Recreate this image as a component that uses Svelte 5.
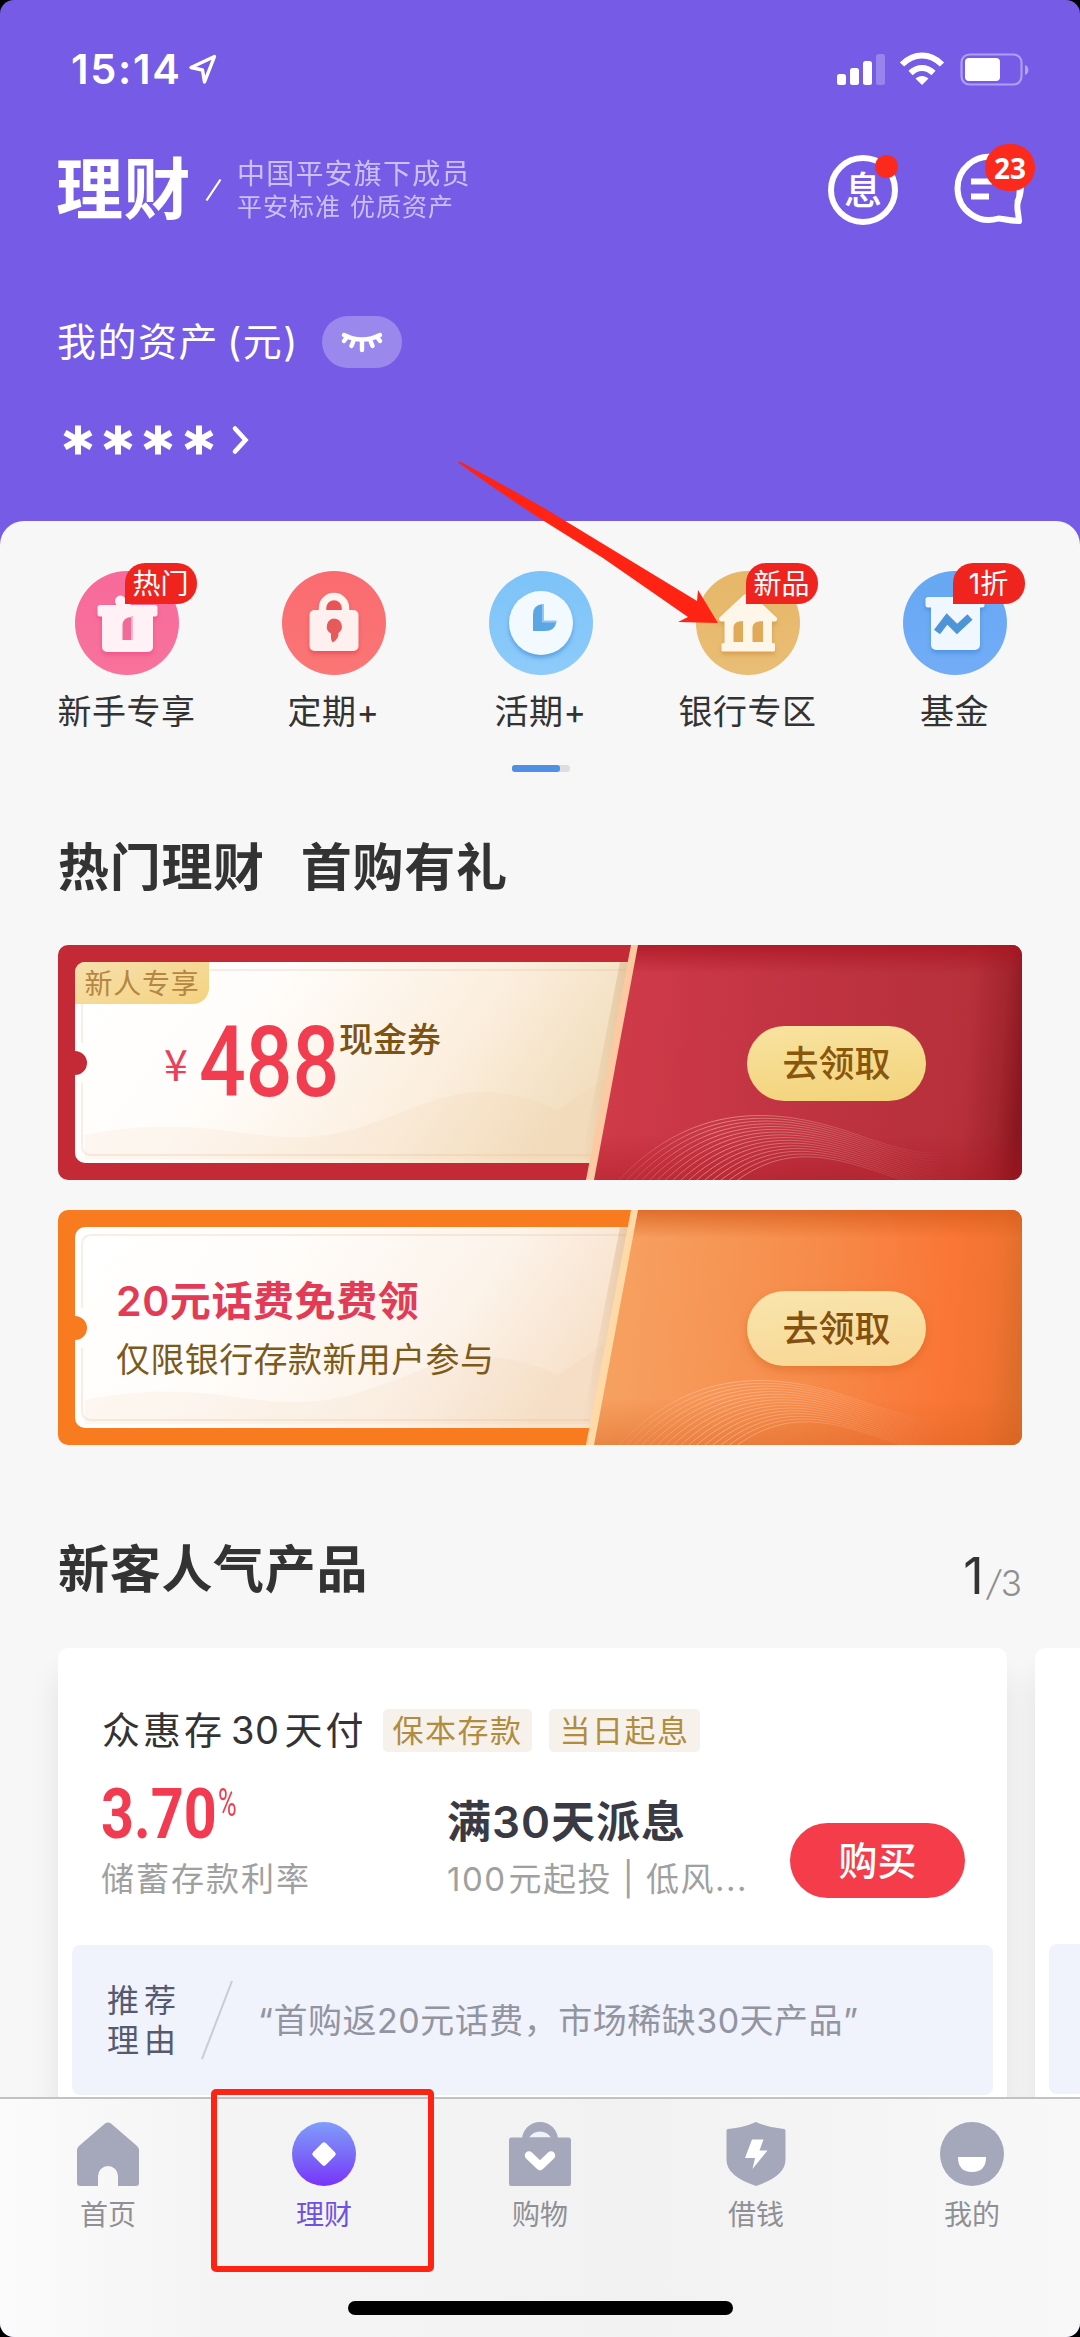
<script>
  const entries = [
    { id: "gift", label: "新手专享", badge: "热门", from: "#f76a9b", to: "#f8729b" },
    { id: "lock", label: "定期+", badge: "", from: "#fa6b70", to: "#fb7676" },
    { id: "clock", label: "活期+", badge: "", from: "#7dc3f8", to: "#8dcbfa" },
    { id: "bank", label: "银行专区", badge: "新品", from: "#e6b768", to: "#e9bd75" },
    { id: "fund", label: "基金", badge: "1折", from: "#66a8f3", to: "#73acf7" },
  ];

  const tabs = [
    { id: "home", label: "首页" },
    { id: "wealth", label: "理财" },
    { id: "shop", label: "购物" },
    { id: "loan", label: "借钱" },
    { id: "mine", label: "我的" },
  ];

  let active = $state("wealth");

  // fine lines of the wave at the bottom of each coupon
  const waves = Array.from({ length: 16 }, (_, i) => {
    const x = i * 6;
    const y = i * 2.9;
    return `M${560 + x} ${236 + y * 0.6} C${640 + x * 0.8} ${150 + y},${730 + x * 0.4} ${165 + y},${800 + x * 0.3} ${190 + y * 0.9} S${880} ${208 + y * 0.9},${900} ${204 + y}`;
  });
</script>

{#snippet coupon(kind)}
  <svg class="art" viewBox="0 0 964 235" aria-hidden="true">
    <defs>
      <clipPath id="{kind}-clip"><rect width="964" height="235" rx="10" /></clipPath>
      <linearGradient id="{kind}-paper" x1="0" y1="0" x2="1" y2="0.25">
        <stop offset="0" stop-color="#ffffff" />
        <stop offset="0.35" stop-color="#fffdfb" />
        <stop offset="0.75" stop-color={kind === "red" ? "#fbeedd" : "#fcf3ea"} />
        <stop offset="1" stop-color={kind === "red" ? "#f3dfc0" : "#f8e2cc"} />
      </linearGradient>
      <linearGradient id="{kind}-right" gradientUnits="userSpaceOnUse" x1="534" y1="90" x2="964" y2="125">
        {#if kind === "red"}
          <stop offset="0" stop-color="#d13b49" />
          <stop offset="0.5" stop-color="#c03342" />
          <stop offset="0.87" stop-color="#b6303a" />
          <stop offset="0.95" stop-color="#a3252d" />
          <stop offset="1" stop-color="#8a1620" />
        {:else}
          <stop offset="0" stop-color="#f6a363" />
          <stop offset="0.5" stop-color="#f68c4b" />
          <stop offset="0.82" stop-color="#fa7636" />
          <stop offset="0.93" stop-color="#f27331" />
          <stop offset="1" stop-color="#dc6c2a" />
        {/if}
      </linearGradient>
      <linearGradient id="{kind}-shade" x1="0" y1="0" x2="0" y2="1">
        <stop offset="0" stop-color={kind === "red" ? "#a8141f" : "#d85d1c"} stop-opacity="0.75" />
        <stop offset="0.12" stop-color={kind === "red" ? "#a8141f" : "#d85d1c"} stop-opacity="0" />
        <stop offset="0.8" stop-color={kind === "red" ? "#a8141f" : "#d85d1c"} stop-opacity="0" />
        <stop offset="1" stop-color={kind === "red" ? "#a8141f" : "#d85d1c"} stop-opacity="0.4" />
      </linearGradient>
      <linearGradient id="{kind}-fold" x1="0" y1="0" x2="1" y2="0">
        <stop offset="0" stop-color="#c08a50" stop-opacity="0" />
        <stop offset="1" stop-color="#c08a50" stop-opacity="0.35" />
      </linearGradient>
      <linearGradient id="{kind}-wave" gradientUnits="userSpaceOnUse" x1="560" y1="0" x2="890" y2="0">
        <stop offset="0" stop-color="#ffd2b8" stop-opacity="0.1" />
        <stop offset="0.3" stop-color="#ffd2b8" stop-opacity="0.5" />
        <stop offset="1" stop-color="#ffd2b8" stop-opacity="0" />
      </linearGradient>
    </defs>
    <g clip-path="url(#{kind}-clip)">
      <rect width="964" height="235" fill={kind === "red" ? "#c42a35" : "#f97b20"} />
      <path d="M27 17H576L536 218H27a10 10 0 0 1-10-10V130a12 12 0 0 0 0-24V27a10 10 0 0 1 10-10Z" fill="url(#{kind}-paper)" />
      <path d="M27 190C150 165 200 205 280 188S400 120 500 165L552 130L534 214H27Z" fill="#f0c89a" opacity="0.12" />
      <path d="M568 25H34Q24 25 24 35V98M24 138V200Q24 210 34 210H532" fill="none" stroke="#d9b78c" stroke-opacity="0.22" stroke-width="2" />
      <path d="M562 17H576L537 218H523Z" fill="url(#{kind}-fold)" />
      <path d="M578 0H964V235H534Z" fill="url(#{kind}-right)" />
      <path d="M578 0H964V235H534Z" fill="url(#{kind}-shade)" />
      <g fill="none" stroke="url(#{kind}-wave)" stroke-width="1">
        {#each waves as d}
          <path {d} />
        {/each}
      </g>
      <path d="M573 0H580L536 235H528Z" fill={kind === "red" ? "#fcc9a2" : "#ffd9a8"} />
    </g>
  </svg>
{/snippet}

<div class="frame">
  <div class="screen">
    <header>
      <div class="status">
        <span class="time">15:14</span>
        <svg class="loc" width="30" height="32" viewBox="0 0 30 32">
          <path d="M26.500 3.500L3 14.500L14.500 17L16.500 29Z" fill="none" stroke="#fff" stroke-width="3.400" stroke-linejoin="round" />
        </svg>
        <svg class="signals" width="194" height="36" viewBox="0 0 194 36">
          <rect x="1" y="23" width="9" height="11" rx="2.500" fill="#fff" />
          <rect x="14" y="17" width="9" height="17" rx="2.500" fill="#fff" />
          <rect x="27" y="10" width="9" height="24" rx="2.500" fill="#fff" />
          <rect x="40" y="3" width="9" height="31" rx="2.500" fill="#fff" opacity="0.25" />
          <g fill="none" stroke="#fff" stroke-width="6">
            <path d="M66 13.500C78 1.500 94 1.500 106 13.500" />
            <path d="M74.500 22C81.500 15.200 90.500 15.200 97.500 22" />
          </g>
          <path d="M79.500 27.500C83.500 24 88.500 24 92.500 27.500L86 34Z" fill="#fff" />
          <rect x="125.500" y="3.500" width="60" height="30" rx="8" fill="none" stroke="#fff" stroke-opacity="0.42" stroke-width="2.200" />
          <rect x="129" y="7" width="35" height="23" rx="4" fill="#fff" />
          <path d="M189 14C193.500 15 193.500 23 189 24Z" fill="#fff" opacity="0.45" />
        </svg>
      </div>

      <div class="brand">
        <h1>理财</h1>
        <svg class="slash" width="17" height="24" viewBox="0 0 17 24"><path d="M1.500 22.500L15.500 1.500" stroke="#fff" stroke-width="2.200" /></svg>
        <div class="slogan">
          <p>中国平安旗下成员</p>
          <p class="small">平安标准 优质资产</p>
        </div>
        <div class="round">息<i class="dot"></i></div>
        <div class="chat">
          <svg width="74" height="74" viewBox="0 0 74 74" fill="none" stroke="#fff">
            <path d="M65 50A31.500 31.500 0 1 0 46.500 65.500C50 65.500 56 67.500 67 68C66.500 60 64 54 66 48.500Q68 43 67.500 36" stroke-width="6" stroke-linejoin="round" />
            <path d="M19 28.500H40M19 43.500H37" stroke-width="6" />
          </svg>
          <b>23</b>
        </div>
      </div>

      <div class="assets">
        <span>我的资产<em>(元)</em></span>
        <button class="eye" type="button" aria-label="隐藏资产">
          <svg width="42" height="24" viewBox="0 0 42 24" fill="none" stroke="#fff" stroke-width="4.400" stroke-linecap="round">
            <path d="M3 5C14 11 28 11 39 5" />
            <path d="M6 7L3 11M13 9.500L10.500 16M21 10V20M29 9.500L31.500 16M36 7L39 11" />
          </svg>
        </button>
      </div>

      <div class="hidden-sum">
        <svg width="190" height="34" viewBox="0 0 190 34" fill="none" stroke="#fff" stroke-width="6">
          {#each [0, 40, 80, 121] as x}
            <path d="M{x + 17} 2.500V31.500M{x + 4} 9.700L{x + 30} 24.300M{x + 4} 24.300L{x + 30} 9.700" />
          {/each}
          <path d="M174 5.500L184.500 17L174 28.500" stroke-width="4.600" stroke-linecap="round" />
        </svg>
      </div>
    </header>

    <main>
      <nav class="entries">
        {#each entries as e}
          <div class="entry">
            <div class="icon">
              <svg width="104" height="104" viewBox="0 0 104 104">
                <defs>
                  <linearGradient id="bg-{e.id}" x1="0" y1="0" x2="0" y2="1">
                    <stop offset="0" stop-color={e.from} />
                    <stop offset="1" stop-color={e.to} />
                  </linearGradient>
                </defs>
                <circle cx="52" cy="52" r="52" fill="url(#bg-{e.id})" />
                {#if e.id === "gift"}
                  <g class="glyph pink">
                    <path d="M43 35a5.500 5.500 0 1 1 7-8L56 34H80a2.500 2.500 0 0 1 2.500 2.500V43a2.500 2.500 0 0 1-2.500 2.500H78V76a5 5 0 0 1-5 5H32a5 5 0 0 1-5-5V45.500H25a2.500 2.500 0 0 1-2.500-2.500V36.500A2.500 2.500 0 0 1 25 34H44Z" fill="#fff1f5" />
                    <path d="M57 46V69H47.500V54Q48 46 57 46Z" fill="#f26a97" />
                    <path d="M57 45V69" stroke="#f9b7cd" stroke-width="2" />
                  </g>
                {:else if e.id === "lock"}
                  <g class="glyph red">
                    <path d="M41 42V37a11.500 11.500 0 0 1 23 0V42" transform="translate(-.500 0)" fill="#e85458" stroke="#fff3ef" stroke-width="7.500" />
                    <rect x="27.500" y="39" width="49" height="41" rx="5" fill="#fdf0ee" />
                    <path d="M52 47.500a8 8 0 0 1 4.500 14.500Q57 68 50.500 71.500V71Q48.500 69 49 62.500A8 8 0 0 1 52 47.500Z" fill="#e65a5c" />
                  </g>
                {:else if e.id === "clock"}
                  <g class="glyph blue">
                    <circle cx="52" cy="52" r="32" fill="#f3faff" />
                    <path d="M54 33V50.500H67.500Q66 60 56 60H44V43Q44 34 54 33Z" fill="#5ca6e6" />
                    <path d="M54 33V50.500H67.500" fill="none" stroke="#91c7f2" stroke-width="2" />
                  </g>
                {:else if e.id === "bank"}
                  <g class="glyph gold">
                    <path d="M47 24.500Q52 20.500 57 24.500L80 46a2.500 2.500 0 0 1-2 4.500H76V72H77.500a1.500 1.500 0 0 1 1.500 1.500V79a1.500 1.500 0 0 1-1.500 1.500H27a1.500 1.500 0 0 1-1.500-1.500V73.500A1.500 1.500 0 0 1 27 72H28.500V50.500H25.500A2.500 2.500 0 0 1 24 46Z" fill="#fef7e9" />
                    <path d="M47 50V71H37.500V56Q38 50 47 50ZM67 50V71H56.500V56Q57 50 67 50Z" fill="#e0aa58" />
                  </g>
                {:else}
                  <g class="glyph blue">
                    <path d="M25 26H79a2.500 2.500 0 0 1 2.500 2.500V34a2.500 2.500 0 0 1-2.500 2.500H77V74a5 5 0 0 1-5 5H33a5 5 0 0 1-5-5V36.500H25a2.500 2.500 0 0 1-2.500-2.500V28.500A2.500 2.500 0 0 1 25 26Z" fill="#f0f7fe" />
                    <path d="M34 61L44 48L54 58L67 46" fill="none" stroke="#4e94d8" stroke-width="7.500" />
                  </g>
                {/if}
              </svg>
              {#if e.badge}
                <span class="badge">{e.badge}</span>
              {/if}
            </div>
            <span class="name">{e.label}</span>
          </div>
        {/each}
      </nav>
      <div class="pager"><i></i></div>

      <h2 class="hot"><span>热门理财</span><span>首购有礼</span></h2>

      <section class="coupon">
        {@render coupon("red")}
        <div class="body">
          <span class="tag">新人专享</span>
          <div class="amount">
            <span class="yen">¥</span>
            <span class="num"><b>488</b></span>
            <span class="unit">现金券</span>
          </div>
        </div>
        <button class="get" type="button">去领取</button>
      </section>

      <section class="coupon second">
        {@render coupon("orange")}
        <div class="body text">
          <strong>20元话费免费领</strong>
          <p>仅限银行存款新用户参与</p>
        </div>
        <button class="get pale" type="button">去领取</button>
      </section>

      <div class="popular">
        <h2>新客人气产品</h2>
        <span class="page"><b>1</b><i>/</i><i>3</i></span>
      </div>

      <div class="cards">
        <article class="card">
          <div class="line">
            <h3>众惠存<span>30</span>天付</h3>
            <span class="mark">保本存款</span>
            <span class="mark wide">当日起息</span>
          </div>
          <div class="info">
            <div class="rate">
              <div class="value"><b>3.70</b><sup>%</sup></div>
              <p>储蓄存款利率</p>
            </div>
            <div class="term">
              <strong>满30天派息</strong>
              <p><span>100</span>元起投 | 低风...</p>
            </div>
            <button class="buy" type="button">购买</button>
          </div>
          <div class="reason">
            <div class="why">推荐<br />理由</div>
            <svg width="32" height="80" viewBox="0 0 32 80"><path d="M1 79L31 1" stroke="#c9cbd8" stroke-width="2" /></svg>
            <p>“首购返20元话费，市场稀缺30天产品”</p>
          </div>
        </article>
        <article class="card next">
          <div class="reason"></div>
        </article>
      </div>
    </main>

    <footer>
      <div class="tabs">
        {#each tabs as t}
          <button class="tab" class:active={active === t.id} type="button" onclick={() => (active = t.id)}>
            <svg width="64" height="64" viewBox="0 0 64 64" fill="#a5a7ba">
              {#if t.id === "home"}
                <path d="M29 1.500Q32-.500 35 1.500L61 24Q63 26 63 28V61Q63 64 60 64H42V54a10 10 0 0 0-20 0V64H4Q1 64 1 61V28Q1 26 3 24Z" />
              {:else if t.id === "wealth"}
                <defs>
                  <linearGradient id="coin" x1="0" y1="0" x2="0" y2="1">
                    <stop offset="0" stop-color="#7f9dfb" />
                    <stop offset="0.5" stop-color="#7a6cf8" />
                    <stop offset="1" stop-color="#7834fa" />
                  </linearGradient>
                </defs>
                <circle cx="32" cy="32" r="32" fill="url(#coin)" />
                <rect x="23" y="23" width="18" height="18" rx="2.500" transform="rotate(45 32 32)" fill="#fff" />
              {:else if t.id === "shop"}
                <path d="M14 18a18 18 0 0 1 36 0Z" />
                <path d="M21 15.500Q25 9.500 32 9.500T43 15.500Z" fill="#f1f1fa" />
                <rect x="1" y="15.500" width="62" height="48.500" rx="2.500" />
                <path d="M21 33.500L32 44L43 33.500" fill="none" stroke="#fff" stroke-width="8.500" stroke-linecap="round" stroke-linejoin="round" />
              {:else if t.id === "loan"}
                <path d="M32 0Q44 5.500 60 7Q61.500 7 61.500 9V38Q61.500 54 32 64Q2.500 54 2.500 38V9Q2.500 7 4 7Q20 5.500 32 0Z" />
                <path d="M28 17.500H39.500L35.500 28.500H43.500L28.500 47L31 36H21Z" fill="#fff" />
              {:else}
                <circle cx="32" cy="32" r="32" />
                <path d="M18 35H46Q46 50 32 50T18 35Z" fill="#fff" />
              {/if}
            </svg>
            <span>{t.label}</span>
          </button>
        {/each}
      </div>
      <div class="home-bar"></div>
    </footer>
  </div>

  <!-- callouts over the screen -->
  <svg class="arrow" width="262" height="166" viewBox="0 0 262 166">
    <path d="M0 1.500L2 .500L36 19L86 47L239 140L240 129L260 162L220 161L230 156L145 97L78 55L32 24Z" fill="#ff2313" />
  </svg>
  <div class="focus-box"></div>
</div>

<style>
  :global(body) {
    background: #000;
  }

  .frame {
    position: relative;
    width: 1080px;
    height: 2337px;
    overflow: hidden;
    background: #000;
    font-family: Inter, "Noto Sans CJK SC", sans-serif;
    color: #333;
  }
  .screen {
    display: flex;
    flex-direction: column;
    height: 2337px;
    border-radius: 14px;
    overflow: hidden;
    background: #755be6;
  }
  h1, h2, h3, p { margin: 0; }
  em, i { font-style: normal; }
  button {
    border: none;
    padding: 0;
    font-family: inherit;
    cursor: pointer;
  }
  svg { display: block; flex: none; }

  header {
    box-sizing: border-box;
    height: 521px;
    flex: none;
    padding: 50px 0 0 56px;
    color: #fff;
  }
  .status {
    display: flex;
    align-items: center;
    height: 38px;
    padding: 0 50px 0 15px;
  }
  .time {
    width: 117px;
    font-size: 41.5px;
    line-height: 38px;
    font-weight: 600;
    letter-spacing: 1.7px;
  }
  .signals { margin-left: auto; }

  .brand {
    display: flex;
    align-items: center;
    height: 80px;
    margin-top: 62px;
  }
  h1 {
    width: 149px;
    font-size: 67px;
    line-height: 82px;
    font-weight: 700;
    letter-spacing: .5px;
  }
  .slogan {
    margin-left: 15px;
    padding-top: 2px;
    opacity: .62;
    font-size: 28px;
    line-height: 33px;
    letter-spacing: 1.2px;
  }
  .slogan .small {
    font-size: 25px;
    letter-spacing: 1px;
    word-spacing: 1px;
  }
  .round {
    position: relative;
    display: grid;
    place-items: center;
    box-sizing: border-box;
    width: 70px;
    height: 70px;
    margin-left: auto;
    border: 6px solid #fff;
    border-radius: 50%;
    font-size: 38px;
    line-height: 38px;
    font-weight: 500;
  }
  .dot {
    position: absolute;
    top: -6px;
    right: -6px;
    width: 23px;
    height: 23px;
    border-radius: 50%;
    background: #fb2a1c;
  }
  .chat {
    position: relative;
    margin: 0 54px 0 54px;
  }
  .chat b {
    position: absolute;
    top: -9px;
    left: 33px;
    width: 50px;
    height: 47px;
    border-radius: 24px;
    background: #fb2a1c;
    font: 700 28px/49px "Noto Sans", sans-serif;
    text-align: center;
  }

  .assets {
    display: flex;
    align-items: center;
    height: 52px;
    margin-top: 86px;
    padding-left: 1px;
    font-size: 39px;
    line-height: 50px;
    letter-spacing: 1.5px;
  }
  .assets em { margin-left: 8px; }
  .eye {
    display: grid;
    place-items: center;
    width: 80px;
    height: 52px;
    margin-left: 23px;
    border-radius: 26px;
    background: rgba(255, 255, 255, .28);
  }
  .hidden-sum {
    margin: 55px 0 0 5px;
  }

  main {
    height: 1576px;
    flex: none;
    border-radius: 24px 24px 0 0;
    background: #f7f7f7;
    overflow: hidden;
  }
  .entries {
    display: grid;
    grid-template-columns: repeat(5, 207px);
    padding: 50px 0 0 23px;
  }
  .entry {
    display: flex;
    flex-direction: column;
    align-items: center;
  }
  .icon {
    position: relative;
    height: 104px;
  }
  .badge {
    position: absolute;
    top: -8px;
    left: 50px;
    width: 72px;
    height: 41px;
    border-radius: 20px 20px 20px 0;
    background: #ef241f;
    color: #fff;
    font-size: 28px;
    line-height: 43px;
    text-align: center;
  }
  .glyph.pink { filter: drop-shadow(0 3px 2px #e8487f99); }
  .glyph.red { filter: drop-shadow(0 3px 2px #e0404a99); }
  .glyph.blue { filter: drop-shadow(0 3px 2px #3b85d299); }
  .glyph.gold { filter: drop-shadow(0 3px 2px #cf8b3499); }
  .name {
    margin-top: 15px;
    font-size: 34px;
    line-height: 44px;
    letter-spacing: .5px;
    white-space: nowrap;
  }
  .pager {
    width: 58px;
    height: 7px;
    margin: 31px auto 0 512px;
    border-radius: 3px;
    background: #dedede;
  }
  .pager i {
    display: block;
    width: 48px;
    height: 7px;
    border-radius: 3px;
    background: #4f8fe6;
  }
  h2 {
    font-size: 51px;
    line-height: 64px;
    font-weight: 700;
    letter-spacing: .7px;
  }
  .hot {
    display: flex;
    gap: 36px;
    margin: 64px 0 0 58px;
  }

  .coupon {
    display: grid;
    grid-template-columns: 689px 179px 1fr;
    width: 964px;
    height: 235px;
    margin: 45px 0 0 58px;
  }
  .coupon.second { margin-top: 30px; }
  .art {
    grid-area: 1 / 1 / 2 / 4;
    width: 964px;
    height: 235px;
  }
  .body {
    grid-area: 1 / 1;
    padding: 17px 0 0 17px;
    z-index: 1;
  }
  .tag {
    display: block;
    width: 134px;
    height: 42px;
    border-radius: 10px 0 16px 0;
    background: linear-gradient(160deg, #f6e0ac, #f4d280);
    color: #b58543;
    font-size: 28px;
    line-height: 44px;
    text-align: center;
    letter-spacing: .7px;
  }
  .amount {
    display: flex;
    align-items: flex-start;
    padding-left: 89px;
    color: #f23c50;
  }
  .yen {
    width: 35px;
    padding-top: 32px;
    font: 400 43px/52px "Noto Sans CJK SC", sans-serif;
    color: #ea4058;
  }
  .num {
    width: 140px;
    height: 100px;
    padding-top: 9px;
    font: 500 98px/100px Roboto, sans-serif;
  }
  .num b {
    display: inline-block;
    font-weight: 500;
    transform: scaleX(.84);
    transform-origin: left;
  }
  .unit {
    padding-top: 14px;
    font-size: 34px;
    line-height: 44px;
    font-weight: 500;
    color: #7c5312;
  }
  .get {
    grid-area: 1 / 2;
    height: 75px;
    margin-top: 81px;
    border-radius: 38px;
    background: linear-gradient(175deg, #f8e3a0, #f3d27a);
    color: #8a560c;
    font-size: 36px;
    line-height: 77px;
    font-weight: 500;
    z-index: 1;
  }
  .get.pale {
    background: linear-gradient(175deg, #f9e5ac, #f8d795);
    color: #84500f;
    box-shadow: 0 4px 8px rgba(200, 80, 10, .35);
  }
  .body.text { padding: 64px 0 0 58px; }
  .body.text strong {
    display: block;
    font-size: 41px;
    line-height: 54px;
    font-weight: 600;
    letter-spacing: .6px;
    color: #e33a55;
  }
  .body.text p {
    margin-top: 9px;
    font-size: 34px;
    line-height: 46px;
    letter-spacing: .4px;
    color: #7c5a1c;
  }

  .popular {
    display: flex;
    justify-content: space-between;
    height: 64px;
    margin: 93px 58px 0;
  }
  .page {
    display: flex;
    align-items: baseline;
    font: 400 50px/76px Inter, sans-serif;
  }
  .page b { font-weight: 400; }
  .page i {
    font-size: 35px;
    font-weight: 300;
    color: #8f8f8f;
    transform: translateY(2px);
  }
  .page b + i { transform: translateY(2px) skewX(-10deg); padding: 0 1px 0 4px; }

  .cards {
    display: flex;
    gap: 28px;
    height: 449px;
    margin-top: 46px;
    padding-left: 58px;
    overflow: hidden;
  }
  .card {
    box-sizing: border-box;
    width: 949px;
    flex: none;
    padding: 54px 14px 0 14px;
    border-radius: 10px 10px 0 0;
    background: #fff;
    box-shadow: 0 26px 30px rgba(0, 0, 0, .09);
  }
  .line {
    display: flex;
    align-items: center;
    height: 56px;
    padding-left: 30px;
  }
  h3 {
    width: 281px;
    font-size: 38px;
    line-height: 56px;
    font-weight: 400;
    letter-spacing: 3px;
    white-space: nowrap;
  }
  h3 span {
    margin: 0 5px 0 6px;
    letter-spacing: .5px;
  }
  .mark {
    width: 149px;
    height: 43px;
    border-radius: 5px;
    background: #f6f1ea;
    color: #b08c3e;
    font-size: 31px;
    line-height: 44px;
    letter-spacing: 1.5px;
    text-align: center;
  }
  .mark.wide {
    width: 151px;
    margin-left: 17px;
  }
  .info {
    display: flex;
    height: 130px;
    padding: 18px 28px 0 29px;
  }
  .rate { width: 346px; }
  .value {
    display: flex;
    height: 66px;
    padding-top: 3px;
    color: #f23b50;
  }
  .value b {
    width: 117px;
    font: 700 71px/70px Roboto, sans-serif;
    transform: scaleX(.81);
    transform-origin: left;
  }
  .value sup {
    font: 400 39px/48px Roboto, sans-serif;
    transform: scaleX(.65);
    transform-origin: left;
  }
  .rate p, .term p {
    font-size: 33px;
    line-height: 44px;
    letter-spacing: 2px;
    color: #a0a0a0;
    white-space: nowrap;
  }
  .rate p { margin-top: 12px; }
  .term p { letter-spacing: 1.5px; }
  .term { width: 343px; }
  .term strong {
    display: block;
    height: 81px;
    font-size: 44px;
    line-height: 92px;
    font-weight: 600;
    letter-spacing: 1px;
    color: #3a3a45;
  }
  .term p span { margin-right: 2px; }
  .buy {
    width: 175px;
    height: 75px;
    margin-top: 47px;
    border-radius: 38px;
    background: #f43c4a;
    color: #fff;
    font-size: 39px;
    line-height: 76px;
    font-weight: 500;
  }
  .reason {
    display: flex;
    align-items: center;
    box-sizing: border-box;
    height: 150px;
    margin-top: 39px;
    padding-left: 35px;
    border-radius: 8px;
    background: #f0f2fc;
  }
  .why {
    width: 94px;
    padding-top: 1px;
    font-size: 32px;
    line-height: 40px;
    letter-spacing: 5px;
    color: #555a70;
  }
  .reason p {
    margin-left: 25px;
    padding-top: 2px;
    font-size: 34px;
    line-height: 44px;
    letter-spacing: .5px;
    color: #9294a1;
    white-space: nowrap;
  }
  .next .reason { margin-top: 242px; }

  footer {
    box-sizing: border-box;
    height: 240px;
    flex: none;
    border-top: 2px solid #c2c2c4;
    background: linear-gradient(90deg, #fbfbfb, #f4f4f4 20%, #f2f2f2 60%, #f8f8f8);
  }
  .tabs {
    display: grid;
    grid-template-columns: repeat(5, 1fr);
    height: 202px;
  }
  .tab {
    display: flex;
    flex-direction: column;
    align-items: center;
    padding-top: 23px;
    background: none;
    color: #8f9096;
    font-size: 28px;
    line-height: 36px;
  }
  .tab span { margin-top: 11px; }
  .tab.active { color: #6e52e0; }
  .home-bar {
    width: 385px;
    height: 14px;
    margin: 0 auto;
    border-radius: 7px;
    background: #000;
  }

  .arrow {
    position: absolute;
    left: 458px;
    top: 461px;
  }
  .focus-box {
    position: absolute;
    left: 211px;
    top: 2089px;
    box-sizing: border-box;
    width: 223px;
    height: 183px;
    border: 6px solid #ff2313;
    border-radius: 5px;
  }
</style>
